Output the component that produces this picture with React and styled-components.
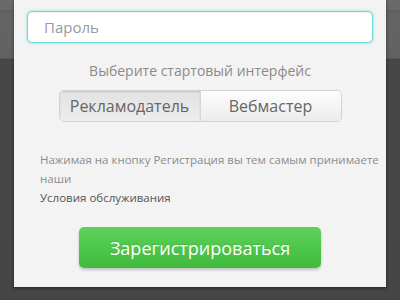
import React from "react";
import styled, { createGlobalStyle } from "styled-components";

const GlobalStyle = createGlobalStyle`
  html, body {
    margin: 0;
    padding: 0;
  }
  body {
    width: 400px;
    height: 300px;
    overflow: hidden;
    font-family: "Open Sans", "DejaVu Sans", sans-serif;
    background:
      linear-gradient(180deg, #6a6a6a 0, #6a6a6a 10px, #5a5a5a 11px, #646464 12px, #626262 58px, #474747 59px, #454545 100%);
  }
`;

const Panel = styled.div`
  box-sizing: border-box;
  margin: 0 14px;
  height: 287px;
  padding: 11px 13px 0;
  background: #f3f3f3;
  box-shadow: 0 1px 3px rgba(0, 0, 0, 0.5);
  display: flex;
  flex-direction: column;
`;

const Input = styled.input`
  box-sizing: border-box;
  width: 100%;
  height: 32px;
  border: 1px solid #72d4d4;
  border-radius: 5px;
  background: #fff;
  box-shadow: 0 0 3px rgba(90, 210, 210, 0.7), inset 0 1px 2px rgba(0, 0, 0, 0.06);
  padding: 0 16px;
  font-family: inherit;
  font-size: 15px;
  color: #555;
  outline: none;
  &::placeholder {
    color: #9a9a9a;
  }
`;

const Label = styled.div`
  margin-top: 18px;
  text-align: center;
  font-size: 14px;
  color: #8a8a8a;
  line-height: 20px;
`;

const Switch = styled.div`
  align-self: center;
  margin-top: 9px;
  width: 283px;
  height: 32px;
  display: flex;
  border: 1px solid #d2d2d2;
  border-radius: 5px;
  overflow: hidden;
  box-sizing: border-box;
`;

const Option = styled.div`
  flex: 1;
  display: flex;
  align-items: center;
  justify-content: center;
  font-size: 16px;
  color: #666;
  background: ${(p) =>
    p.$active
      ? "linear-gradient(180deg, #e2e2e2 0%, #ededed 100%)"
      : "linear-gradient(180deg, #fdfdfd 0%, #ececec 100%)"};
  box-shadow: ${(p) => (p.$active ? "inset 0 1px 2px rgba(0,0,0,0.12)" : "none")};
  & + & {
    border-left: 1px solid #d6d6d6;
  }
`;

const Terms = styled.div`
  margin-top: 28px;
  margin-right: -14px;
  padding-left: 13px;
  font-size: 11.5px;
  line-height: 19px;
  color: #8c8c8c;
`;

const TermsLink = styled.div`
  color: #555;
`;

const Submit = styled.button`
  align-self: center;
  margin-top: 20px;
  width: 242px;
  height: 41px;
  border: none;
  border-radius: 5px;
  background: linear-gradient(180deg, #5fd05b 0%, #4ac548 60%, #3fba3e 100%);
  box-shadow: 0 2px 3px rgba(0, 0, 0, 0.2);
  color: #fff;
  font-family: inherit;
  font-size: 18px;
  text-shadow: 0 -1px 0 rgba(0, 0, 0, 0.1);
  cursor: pointer;
`;

export default function App() {
  return (
    <>
      <GlobalStyle />
      <Panel>
        <Input type="password" placeholder="Пароль" />
        <Label>Выберите стартовый интерфейс</Label>
        <Switch>
          <Option $active>Рекламодатель</Option>
          <Option>Вебмастер</Option>
        </Switch>
        <Terms>
          Нажимая на кнопку Регистрация вы тем самым принимаете наши
          <TermsLink>Условия обслуживания</TermsLink>
        </Terms>
        <Submit>Зарегистрироваться</Submit>
      </Panel>
    </>
  );
}
